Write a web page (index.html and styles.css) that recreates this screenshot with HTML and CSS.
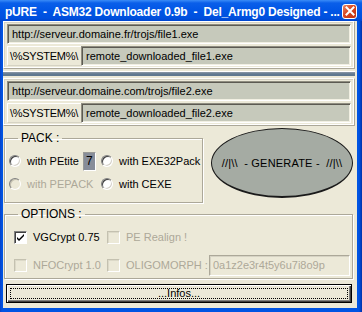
FILE: index.html
```html
<!DOCTYPE html>
<html lang="fr">
<head>
    <meta charset="UTF-8">
    <title>pURE - ASM32 Downloader 0.9b</title>
    <link rel="stylesheet" href="styles.css">
</head>
<body>

<div class="window">
    <div class="titlebar">
        <span class="title">pURE  -  ASM32 Downloader 0.9b  -  Del_Armg0 Designed - ...</span>
        <span class="close">
            <svg width="10" height="10" viewBox="0 0 10 10">
                <path d="M1.5 1.5 L8.5 8.5 M8.5 1.5 L1.5 8.5" stroke="#fff" stroke-width="2" stroke-linecap="square"/>
            </svg>
        </span>
    </div>

    <div class="frame">
        <div class="client">
            <div class="file-panel">
                <div class="field">http://serveur.domaine.fr/trojs/file1.exe</div>
                <div class="row">
                    <div class="label">\%SYSTEM%\</div>
                    <div class="field grow">remote_downloaded_file1.exe</div>
                </div>
            </div>

            <div class="splitter"></div>

            <div class="file-panel">
                <div class="field">http://serveur.domaine.com/trojs/file2.exe</div>
                <div class="row">
                    <div class="label">\%SYSTEM%\</div>
                    <div class="field grow">remote_downloaded_file2.exe</div>
                </div>
            </div>

            <div class="middle">
                <fieldset class="group pack">
                    <legend>PACK :</legend>
                    <div class="pack-grid">
                        <div class="opt"><span class="radio"></span>with PEtite<span class="level">7</span></div>
                        <div class="opt"><span class="radio"></span>with EXE32Pack</div>
                        <div class="opt disabled"><span class="radio"></span>with PEPACK</div>
                        <div class="opt"><span class="radio"></span>with CEXE</div>
                    </div>
                </fieldset>
                <div class="generate">//|\\  - GENERATE -  //|\\</div>
            </div>

            <fieldset class="group options">
                <legend>OPTIONS :</legend>
                <div class="opt-grid">
                    <div class="opt"><span class="check on">
                        <svg width="9" height="9" viewBox="0 0 9 9"><path d="M1 4 L3 6 L8 1 L8 3 L3 8 L1 6 Z" fill="#000"/></svg>
                    </span>VGCrypt 0.75</div>
                    <div class="opt disabled"><span class="check"></span>PE Realign !</div>
                    <div class="opt disabled"><span class="check"></span>NFOCrypt 1.0</div>
                    <div class="opt disabled"><span class="check"></span>OLIGOMORPH :
                        <span class="key">0a1z2e3r4t5y6u7i8o9p</span></div>
                </div>
            </fieldset>

            <div class="infos"><span class="focus">...Infos...</span></div>
        </div>
    </div>
</div>

</body>
</html>
```

FILE: styles.css
```css
* {
    box-sizing: border-box;
}

body {
    margin: 0;
    font-family: "Liberation Sans", Arial, sans-serif;
    font-size: 11px;
    color: #000;
}

.window {
    width: 362px;
    height: 312px;
    display: flex;
    flex-direction: column;
    background: #0054e3;
}

.titlebar {
    height: 21px;
    display: flex;
    align-items: center;
    justify-content: space-between;
    padding: 0 5px 0 5px;
    background: linear-gradient(#3b8cf7 0, #0a5fe9 3px, #0055e5 11px, #0050de 18px, #0046cf 21px);
}

.title {
    white-space: pre;
    color: #fff;
    font-weight: bold;
    font-size: 12px;
    letter-spacing: -0.22px;
    padding-top: 2px;
}

.close {
    width: 15px;
    height: 15px;
    margin-top: 1px;
    display: flex;
    align-items: center;
    justify-content: center;
    border: 1px solid #fff;
    border-radius: 3px;
    background: linear-gradient(135deg, #e88a6c, #d8451f 45%, #c0300f);
}

.frame {
    flex: 1;
    padding: 0 5px 4px 3px;
    background: linear-gradient(90deg, #0841c8 0, #0054e3 2px, #0054e3 calc(100% - 3px), #0031a8 100%);
}

.client {
    height: 100%;
    background: #ece9d8;
    display: flex;
    flex-direction: column;
}

/* fichiers a telecharger */
.file-panel {
    display: flex;
    flex-direction: column;
    gap: 2px;
    margin-right: 2px;
    padding: 2px 3px 2px 3px;
    border: 1px solid #fff;
    border-right-color: #aca899;
    border-bottom-color: #aca899;
    box-shadow: inset -1px -1px #fff, inset 1px 1px #d6d3c4;
}

.row {
    display: flex;
}

.field {
    height: 20px;
    line-height: 16px;
    padding: 1px 4px;
    background: #c6c9bb;
    border: 1px solid #8f8d80;
    border-right-color: #fff;
    border-bottom-color: #fff;
    box-shadow: inset 1px 1px #5c5a52, inset -1px -1px #f1efe2;
    white-space: nowrap;
}

.grow {
    flex: 1;
}

.label {
    width: 74px;
    height: 20px;
    line-height: 18px;
    padding-left: 2px;
    letter-spacing: -0.3px;
    border-left: 1px solid #fff;
    border-top: 1px solid #fff;
    border-bottom: 1px solid #d6d3c4;
    white-space: nowrap;
}

.splitter {
    height: 7px;
    margin: 2px 2px 0 0;
    border-top: 1px solid #fff;
    background: linear-gradient(#8e9aa8 0, #5f7890 2px, #5f7890 4px, #ece9d8 4px);
}

/* groupes */
.middle {
    display: flex;
    align-items: flex-start;
    margin-top: 5px;
    padding-left: 1px;
}

.group {
    margin: 0;
    padding: 0 0 0 4px;
    border: 1px solid #aca899;
    border-radius: 0;
    box-shadow: inset 1px 1px #fff, 1px 1px #fff;
}

.group legend {
    margin-left: 9px;
    padding: 0 3px;
    font-size: 12px;
}

.pack {
    width: 199px;
    height: 72px;
}

.pack-grid {
    display: grid;
    grid-template-columns: 92px 1fr;
    row-gap: 9px;
    margin-top: 9px;
}

.opt {
    display: flex;
    align-items: center;
    height: 14px;
    white-space: nowrap;
}

.disabled {
    color: #aca899;
}

.radio {
    width: 12px;
    height: 12px;
    margin-right: 6px;
    border-radius: 50%;
    background: #fff;
    border: 1px solid #fff;
    border-top-color: #808080;
    border-left-color: #808080;
    box-shadow: inset 1px 1px #404040, inset -1px -1px #d4d0c8;
}

.disabled .radio {
    background: #ece9d8;
    box-shadow: inset 1px 1px #c4c1b0;
}

.level {
    width: 13px;
    height: 19px;
    margin-left: 4px;
    padding-left: 2px;
    line-height: 17px;
    font-size: 12px;
    background: #878d99;
    border: 1px solid #fff;
    border-top-color: #9a9a96;
    border-left-color: #9a9a96;
}

.generate {
    width: 142px;
    height: 70px;
    margin: -3px 0 0 8px;
    display: flex;
    align-items: center;
    justify-content: center;
    white-space: pre;
    font-size: 11px;
    letter-spacing: 0.2px;
    background: #a5aba3;
    border: 1px solid #1a1a1a;
    border-bottom-width: 2px;
    border-radius: 50%;
}

.options {
    height: 72px;
    margin: 4px 4px 0 1px;
}

.opt-grid {
    display: grid;
    grid-template-columns: 93px 1fr;
    row-gap: 14px;
    margin-top: 9px;
    padding-left: 5px;
}

.check {
    width: 13px;
    height: 13px;
    margin-right: 6px;
    display: flex;
    align-items: center;
    justify-content: center;
    border: 1px solid #fff;
    border-top-color: #808080;
    border-left-color: #808080;
    box-shadow: inset 1px 1px #404040;
}

.check.on {
    background: #fff;
}

.disabled .check {
    border-color: #c4c1b0 #fff #fff #c4c1b0;
    box-shadow: inset 1px 1px #dcd9c8;
}

.key {
    width: 141px;
    height: 21px;
    margin-left: 1px;
    line-height: 19px;
    padding-left: 3px;
    font-size: 11px;
    border: 1px solid #fff;
    border-top-color: #aca899;
    border-left-color: #aca899;
    box-shadow: inset 1px 1px #d6d3c4;
}

.infos {
    height: 19px;
    margin: 5px 5px 0 3px;
    padding: 3px 3px;
    border: 1px solid #000;
    background: #ece9d8;
    box-shadow: inset 1px 1px #fff, inset -1px -1px #404040, inset -2px -2px #808080;
}

.focus {
    display: block;
    height: 11px;
    line-height: 9px;
    text-align: center;
    border: 1px dotted #000;
}
```
